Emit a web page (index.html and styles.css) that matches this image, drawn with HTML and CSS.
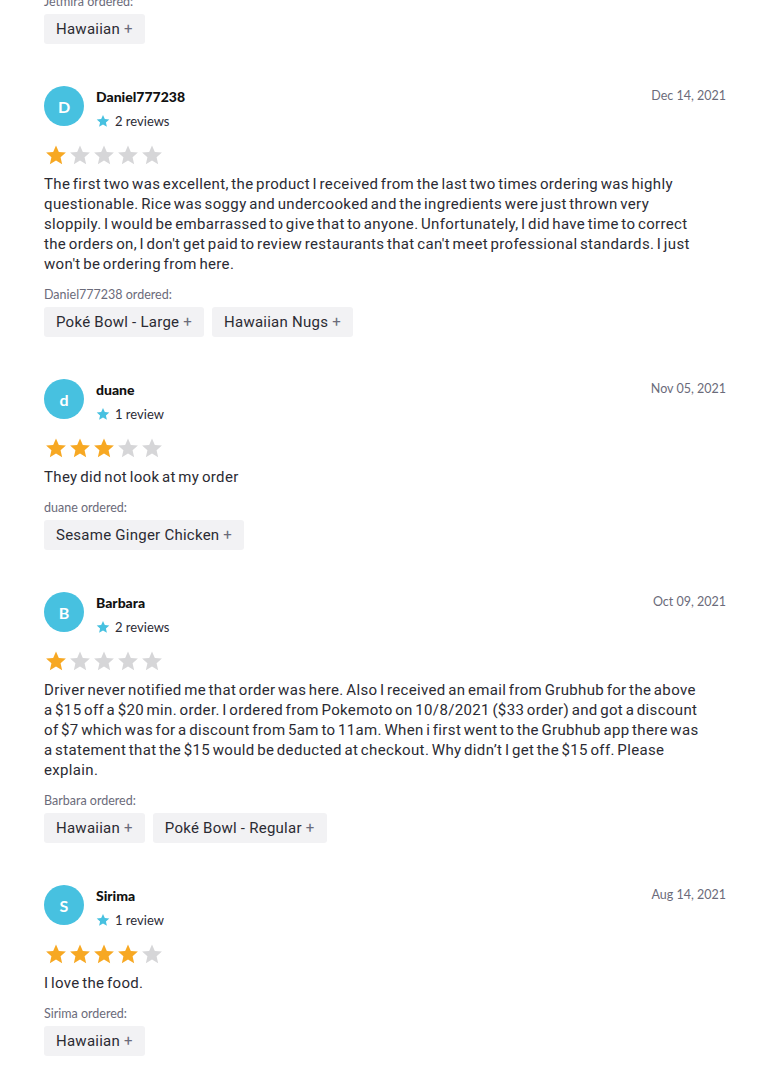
FILE: index.html
```html
<!DOCTYPE html>
<html>
<head>
<meta charset="utf-8">
<link rel="stylesheet" href="styles.css">
</head>
<body>
<div class="reviews">
  <div class="review partial">
    <div class="ordered-label">Jetmira ordered:</div>
    <div class="chips"><span class="chip">Hawaiian <span class="plus">+</span></span></div>
  </div>

  <div class="review">
    <div class="head">
      <div class="avatar">D</div>
      <div class="who">
        <div class="name">Daniel777238</div>
        <div class="count"><svg class="mini-star" viewBox="0 0 24 24"><path d="M12 1.5l3.1 7.1 7.7.7-5.8 5.1 1.7 7.6L12 18l-6.7 4 1.7-7.6L1.2 9.3l7.7-.7z"/></svg>2 reviews</div>
      </div>
      <div class="date">Dec 14, 2021</div>
    </div>
    <div class="stars">
      <svg class="star on" viewBox="0 0 24 24"><path d="M12 1.5l3.1 7.1 7.7.7-5.8 5.1 1.7 7.6L12 18l-6.7 4 1.7-7.6L1.2 9.3l7.7-.7z"/></svg>
      <svg class="star" viewBox="0 0 24 24"><path d="M12 1.5l3.1 7.1 7.7.7-5.8 5.1 1.7 7.6L12 18l-6.7 4 1.7-7.6L1.2 9.3l7.7-.7z"/></svg>
      <svg class="star" viewBox="0 0 24 24"><path d="M12 1.5l3.1 7.1 7.7.7-5.8 5.1 1.7 7.6L12 18l-6.7 4 1.7-7.6L1.2 9.3l7.7-.7z"/></svg>
      <svg class="star" viewBox="0 0 24 24"><path d="M12 1.5l3.1 7.1 7.7.7-5.8 5.1 1.7 7.6L12 18l-6.7 4 1.7-7.6L1.2 9.3l7.7-.7z"/></svg>
      <svg class="star" viewBox="0 0 24 24"><path d="M12 1.5l3.1 7.1 7.7.7-5.8 5.1 1.7 7.6L12 18l-6.7 4 1.7-7.6L1.2 9.3l7.7-.7z"/></svg>
    </div>
    <p class="text">The first two was excellent, the product I received from the last two times ordering was highly questionable. Rice was soggy and undercooked and the ingredients were just thrown very sloppily. I would be embarrassed to give that to anyone. Unfortunately, I did have time to correct the orders on, I don't get paid to review restaurants that can't meet professional standards. I just won't be ordering from here.</p>
    <div class="ordered-label">Daniel777238 ordered:</div>
    <div class="chips"><span class="chip">Poké Bowl - Large <span class="plus">+</span></span><span class="chip">Hawaiian Nugs <span class="plus">+</span></span></div>
  </div>

  <div class="review">
    <div class="head">
      <div class="avatar">d</div>
      <div class="who">
        <div class="name">duane</div>
        <div class="count"><svg class="mini-star" viewBox="0 0 24 24"><path d="M12 1.5l3.1 7.1 7.7.7-5.8 5.1 1.7 7.6L12 18l-6.7 4 1.7-7.6L1.2 9.3l7.7-.7z"/></svg>1 review</div>
      </div>
      <div class="date">Nov 05, 2021</div>
    </div>
    <div class="stars">
      <svg class="star on" viewBox="0 0 24 24"><path d="M12 1.5l3.1 7.1 7.7.7-5.8 5.1 1.7 7.6L12 18l-6.7 4 1.7-7.6L1.2 9.3l7.7-.7z"/></svg>
      <svg class="star on" viewBox="0 0 24 24"><path d="M12 1.5l3.1 7.1 7.7.7-5.8 5.1 1.7 7.6L12 18l-6.7 4 1.7-7.6L1.2 9.3l7.7-.7z"/></svg>
      <svg class="star on" viewBox="0 0 24 24"><path d="M12 1.5l3.1 7.1 7.7.7-5.8 5.1 1.7 7.6L12 18l-6.7 4 1.7-7.6L1.2 9.3l7.7-.7z"/></svg>
      <svg class="star" viewBox="0 0 24 24"><path d="M12 1.5l3.1 7.1 7.7.7-5.8 5.1 1.7 7.6L12 18l-6.7 4 1.7-7.6L1.2 9.3l7.7-.7z"/></svg>
      <svg class="star" viewBox="0 0 24 24"><path d="M12 1.5l3.1 7.1 7.7.7-5.8 5.1 1.7 7.6L12 18l-6.7 4 1.7-7.6L1.2 9.3l7.7-.7z"/></svg>
    </div>
    <p class="text">They did not look at my order</p>
    <div class="ordered-label">duane ordered:</div>
    <div class="chips"><span class="chip">Sesame Ginger Chicken <span class="plus">+</span></span></div>
  </div>

  <div class="review">
    <div class="head">
      <div class="avatar">B</div>
      <div class="who">
        <div class="name">Barbara</div>
        <div class="count"><svg class="mini-star" viewBox="0 0 24 24"><path d="M12 1.5l3.1 7.1 7.7.7-5.8 5.1 1.7 7.6L12 18l-6.7 4 1.7-7.6L1.2 9.3l7.7-.7z"/></svg>2 reviews</div>
      </div>
      <div class="date">Oct 09, 2021</div>
    </div>
    <div class="stars">
      <svg class="star on" viewBox="0 0 24 24"><path d="M12 1.5l3.1 7.1 7.7.7-5.8 5.1 1.7 7.6L12 18l-6.7 4 1.7-7.6L1.2 9.3l7.7-.7z"/></svg>
      <svg class="star" viewBox="0 0 24 24"><path d="M12 1.5l3.1 7.1 7.7.7-5.8 5.1 1.7 7.6L12 18l-6.7 4 1.7-7.6L1.2 9.3l7.7-.7z"/></svg>
      <svg class="star" viewBox="0 0 24 24"><path d="M12 1.5l3.1 7.1 7.7.7-5.8 5.1 1.7 7.6L12 18l-6.7 4 1.7-7.6L1.2 9.3l7.7-.7z"/></svg>
      <svg class="star" viewBox="0 0 24 24"><path d="M12 1.5l3.1 7.1 7.7.7-5.8 5.1 1.7 7.6L12 18l-6.7 4 1.7-7.6L1.2 9.3l7.7-.7z"/></svg>
      <svg class="star" viewBox="0 0 24 24"><path d="M12 1.5l3.1 7.1 7.7.7-5.8 5.1 1.7 7.6L12 18l-6.7 4 1.7-7.6L1.2 9.3l7.7-.7z"/></svg>
    </div>
    <p class="text">Driver never notified me that order was here. Also I received an email from Grubhub for the above a $15 off a $20 min. order. I ordered from Pokemoto on 10/8/2021 ($33 order) and got a discount of $7 which was for a discount from 5am to 11am. When i first went to the Grubhub app there was a statement that the $15 would be deducted at checkout. Why didn’t I get the $15 off. Please explain.</p>
    <div class="ordered-label">Barbara ordered:</div>
    <div class="chips"><span class="chip">Hawaiian <span class="plus">+</span></span><span class="chip">Poké Bowl - Regular <span class="plus">+</span></span></div>
  </div>

  <div class="review">
    <div class="head">
      <div class="avatar">S</div>
      <div class="who">
        <div class="name">Sirima</div>
        <div class="count"><svg class="mini-star" viewBox="0 0 24 24"><path d="M12 1.5l3.1 7.1 7.7.7-5.8 5.1 1.7 7.6L12 18l-6.7 4 1.7-7.6L1.2 9.3l7.7-.7z"/></svg>1 review</div>
      </div>
      <div class="date">Aug 14, 2021</div>
    </div>
    <div class="stars">
      <svg class="star on" viewBox="0 0 24 24"><path d="M12 1.5l3.1 7.1 7.7.7-5.8 5.1 1.7 7.6L12 18l-6.7 4 1.7-7.6L1.2 9.3l7.7-.7z"/></svg>
      <svg class="star on" viewBox="0 0 24 24"><path d="M12 1.5l3.1 7.1 7.7.7-5.8 5.1 1.7 7.6L12 18l-6.7 4 1.7-7.6L1.2 9.3l7.7-.7z"/></svg>
      <svg class="star on" viewBox="0 0 24 24"><path d="M12 1.5l3.1 7.1 7.7.7-5.8 5.1 1.7 7.6L12 18l-6.7 4 1.7-7.6L1.2 9.3l7.7-.7z"/></svg>
      <svg class="star on" viewBox="0 0 24 24"><path d="M12 1.5l3.1 7.1 7.7.7-5.8 5.1 1.7 7.6L12 18l-6.7 4 1.7-7.6L1.2 9.3l7.7-.7z"/></svg>
      <svg class="star" viewBox="0 0 24 24"><path d="M12 1.5l3.1 7.1 7.7.7-5.8 5.1 1.7 7.6L12 18l-6.7 4 1.7-7.6L1.2 9.3l7.7-.7z"/></svg>
    </div>
    <p class="text">I love the food.</p>
    <div class="ordered-label">Sirima ordered:</div>
    <div class="chips"><span class="chip">Hawaiian <span class="plus">+</span></span></div>
  </div>
</div>
</body>
</html>
```

FILE: styles.css
```css
html, body {
  margin: 0;
  padding: 0;
  background: #ffffff;
}
body {
  font-family: "Roboto", "Liberation Sans", sans-serif;
  color: #2b2b33;
  overflow: hidden;
}
.reviews {
  width: 682px;
  padding: 0 44px;
  display: flex;
  flex-direction: column;
  gap: 42px;
}
.review.partial {
  margin-top: -7px;
}
.head {
  display: flex;
  align-items: flex-start;
}
.avatar {
  width: 40px;
  height: 40px;
  border-radius: 50%;
  background: #47c1e0;
  color: #ffffff;
  font-family: "Lato", "Liberation Sans", sans-serif;
  font-weight: 700;
  font-size: 16px;
  display: flex;
  align-items: center;
  justify-content: center;
  flex: none;
}
.who {
  margin-left: 12px;
  flex: 1;
  padding-top: 1px;
}
.name {
  font-family: "Lato", "Liberation Sans", sans-serif;
  font-weight: 900;
  font-size: 14px;
  line-height: 20px;
  color: #111111;
}
.count {
  margin-top: 4px;
  display: flex;
  align-items: center;
  gap: 5px;
  font-family: "Lato", "Liberation Sans", sans-serif;
  font-size: 13px;
  line-height: 20px;
  color: #2b2b36;
}
.mini-star {
  width: 14px;
  height: 14px;
  fill: #47c1e0;
}
.date {
  font-family: "Lato", "Liberation Sans", sans-serif;
  font-size: 12.5px;
  line-height: 20px;
  color: #6b6b7a;
}
.stars {
  display: flex;
  gap: 2px;
  margin-top: 12px;
  margin-left: 1px;
  height: 24px;
  align-items: center;
}
.star {
  width: 22px;
  height: 22px;
  fill: #d6d6d8;
}
.star.on {
  fill: #f7a823;
}
.text {
  margin: 7px 0 0;
  padding-right: 22px;
  font-size: 15px;
  letter-spacing: 0.35px;
  word-spacing: -1.5px;
  line-height: 20px;
  color: #2b2b33;
}
.ordered-label {
  margin-top: 12px;
  font-family: "Lato", "Liberation Sans", sans-serif;
  font-size: 12.5px;
  line-height: 18px;
  color: #6b6b7a;
}
.review.partial .ordered-label {
  margin-top: 0;
}
.chips {
  margin-top: 3px;
  display: flex;
  gap: 8px;
}
.chip {
  height: 30px;
  padding: 0 12px;
  background: #f2f2f4;
  border-radius: 3px;
  font-size: 15px;
  letter-spacing: 0.25px;
  line-height: 30px;
  color: #2b2b33;
}
.plus {
  color: #6b6b7a;
}
```
